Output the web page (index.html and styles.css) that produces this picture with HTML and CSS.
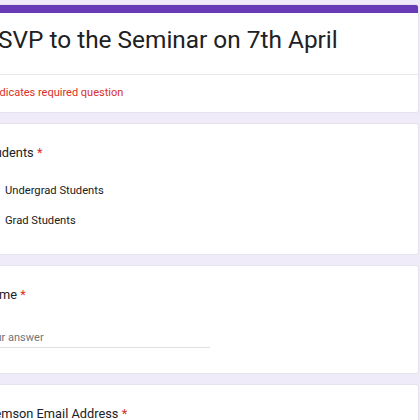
FILE: index.html
```html
<!DOCTYPE html>
<html lang="en">

<head>
    <meta charset="UTF-8" />
    <meta name="viewport" content="width=device-width, initial-scale=1.0" />
    <title>RSVP to the Seminar on 7th April</title>
    <link rel="stylesheet" href="styles.css">
</head>

<body>
    <div class="form">
        <div class="card header-card">
            <div class="form-title">
                <h1>RSVP to the Seminar on 7th April</h1>
            </div>
            <div class="required-note">* Indicates required question</div>
        </div>

        <div class="card question">
            <div class="question-title">Students <span class="star">*</span></div>
            <div class="options">
                <label class="option">
                    <span class="radio"></span>
                    <span>Undergrad Students</span>
                </label>
                <label class="option">
                    <span class="radio"></span>
                    <span>Grad Students</span>
                </label>
            </div>
        </div>

        <div class="card question">
            <div class="question-title">Name <span class="star">*</span></div>
            <div class="answer">
                <input type="text" placeholder="Your answer" />
            </div>
        </div>

        <div class="card question">
            <div class="question-title">Clemson Email Address <span class="star">*</span></div>
            <div class="answer">
                <input type="text" placeholder="Your answer" />
            </div>
        </div>
    </div>
</body>

</html>
```

FILE: styles.css
```css
body {
    margin: 0;
    font-family: Roboto, Arial, sans-serif;
    background-color: #f0ebf8;
    color: #202124;
    overflow: hidden;
}

.form {
    margin-left: -36px;
    width: 454px;
    padding-top: 5px;
    display: flex;
    flex-direction: column;
    gap: 12px;
}

.card {
    background-color: #fff;
    border-radius: 2px;
    box-shadow: 0 0 0 1px #e6e2ee;
    padding: 0 19px;
}

.header-card {
    border-top: 8px solid #673ab7;
    padding: 0;
}

.form-title {
    padding: 11px 19px 18px;
    border-bottom: 1px solid #e8e8e8;
}

.form-title h1 {
    margin: 0;
    font-size: 24.4px;
    font-weight: 400;
    line-height: 32px;
    white-space: nowrap;
}

.required-note {
    padding: 10px 19px 11px;
    font-size: 11px;
    line-height: 16px;
    color: #d93025;
}

.question {
    padding-top: 19px;
    padding-bottom: 18px;
}

.question-title {
    font-size: 12.8px;
    line-height: 20px;
    white-space: nowrap;
}

.star {
    color: #d93025;
}

.options {
    margin-top: 13px;
}

.option {
    display: flex;
    align-items: center;
    gap: 6px;
    height: 30px;
    font-size: 11.2px;
    line-height: 16px;
}

.radio {
    width: 12px;
    height: 12px;
    border: 2px solid #5f6368;
    border-radius: 50%;
}

.answer {
    margin-top: 16px;
    width: 227px;
    padding-bottom: 7px;
}

.answer input {
    width: 100%;
    border: none;
    border-bottom: 1px solid #e0e0e0;
    padding: 9px 0 1px;
    font-family: Roboto, Arial, sans-serif;
    font-size: 11px;
    line-height: 16px;
    color: #202124;
    outline: none;
    background: transparent;
}

.answer input::placeholder {
    color: #70757a;
}
```
